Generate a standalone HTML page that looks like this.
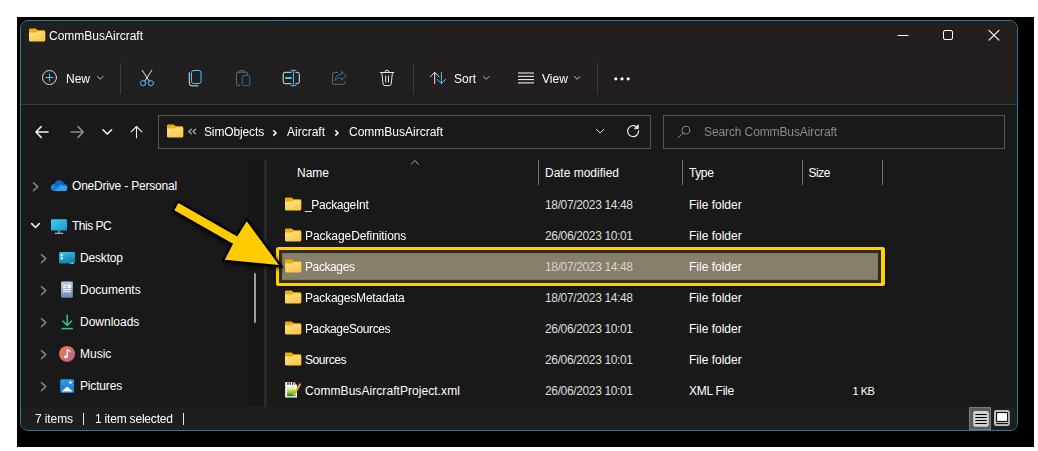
<!DOCTYPE html>
<html>
<head>
<meta charset="utf-8">
<title>CommBusAircraft</title>
<style>
*{margin:0;padding:0;box-sizing:border-box;}
html,body{width:1038px;height:451px;overflow:hidden;background:#fff;}
body{position:relative;font-family:"Liberation Sans",sans-serif;font-size:12px;color:#fff;}
.abs{position:absolute;}
#black{position:absolute;left:17px;top:17px;width:1017px;height:430px;background:#000;}
#win{position:absolute;left:20px;top:20px;width:998px;height:411px;border:1px solid #2b7a99;border-radius:8px;background:#191919;overflow:hidden;}
/* coordinates inside #win-inner are page coordinates (offset compensated) */
#in{position:absolute;left:-21px;top:-21px;width:1038px;height:451px;}
#top{position:absolute;left:21px;top:21px;width:996px;height:83px;background:linear-gradient(90deg,#202020 0%,#202020 12%,#221f1e 45%,#231f1e 100%);}
#topline{position:absolute;left:21px;top:104px;width:996px;height:1px;background:#3b3b3b;}
#status{position:absolute;left:21px;top:407px;width:996px;height:23px;background:#1e1e1e;}
.g{will-change:transform;}
.t{position:absolute;white-space:nowrap;line-height:14px;height:14px;color:#fff;}
.sep{position:absolute;width:1px;background:#3d3d3d;}
.box{position:absolute;border:1px solid #555;background:#191919;}
.colsep{position:absolute;width:1px;height:25px;top:160px;background:#747474;}
svg{position:absolute;overflow:visible;}
.ln{fill:none;stroke:#e6e6e6;stroke-width:1;stroke-linecap:round;stroke-linejoin:round;}
.bl{fill:none;stroke:#4cc2ff;stroke-width:1;stroke-linecap:round;stroke-linejoin:round;}
.chev{fill:none;stroke:#7c7c7c;stroke-width:1.6;stroke-linecap:round;stroke-linejoin:round;}
</style>
</head>
<body>
<div id="black"></div>
<div id="win"><div id="in">
  <div id="top"></div>
  <svg width="0" height="0" style="left:0;top:0;">
    <defs>
      <linearGradient id="ff" x1="0" y1="0" x2="0.6" y2="1">
        <stop offset="0" stop-color="#ffe391"/>
        <stop offset="1" stop-color="#fbc748"/>
      </linearGradient>
      <g id="folder">
        <path d="M0,1.6 Q0,0.4 1.2,0.4 H6.3 Q6.9,0.4 7.4,0.9 L8.7,2.2 H14.9 Q16.2,2.2 16.2,3.5 V12 H0 Z" fill="#f0ae00"/>
        <path d="M0,4.4 H6.4 Q7.1,4.4 7.7,3.9 L8.3,3.5 Q8.7,3.3 9.2,3.3 H15 Q16.2,3.3 16.2,4.5 V12.3 Q16.2,13.5 15,13.5 H1.2 Q0,13.5 0,12.3 Z" fill="url(#ff)"/>
      </g>
    </defs>
  </svg>

  <div id="topline"></div>


  <div class="box" style="left:158px;top:115px;width:493px;height:34px;"></div>
  <div class="box" style="left:663px;top:115px;width:342px;height:34px;"></div>
  <!-- ICONS -->
  <!-- title folder -->
  <svg style="left:29px;top:27.5px;" width="17" height="14"><use href="#folder"/></svg>
  <!-- window controls -->
  <svg style="left:0;top:0;" width="1038" height="60">
    <path class="ln" d="M898,35.5 H908" style="stroke:#fff"/>
    <rect class="ln" x="943.5" y="30.5" width="9" height="9" rx="1.5" style="stroke:#fff"/>
    <path class="ln" d="M989,30.3 L999,40.2 M999,30.3 L989,40.2" style="stroke:#fff;stroke-width:1.1"/>
  </svg>
  <!-- toolbar icons -->
  <svg style="left:0;top:0;" width="1038" height="100">
    <!-- new -->
    <circle class="ln" cx="49.5" cy="77.5" r="7" style="stroke:#dcdcdc"/>
    <path class="bl" d="M46,77.5 H53 M49.5,74 V81"/>
    <path class="chev" d="M97.5,76.5 L100.2,79.3 L103,76.5" style="stroke:#bdbdbd;stroke-width:1"/>
    <!-- cut -->
    <path class="ln" d="M142.3,70.3 L149.3,81.2 M151.7,70.3 L144.7,81.2"/>
    <circle class="bl" cx="143.1" cy="83.2" r="2.6"/>
    <circle class="bl" cx="150.9" cy="83.2" r="2.6"/>
    <!-- copy -->
    <rect class="bl" x="191.5" y="70.5" width="9.5" height="13" rx="2"/>
    <path class="ln" d="M189.3,72.8 V83.3 Q189.3,85.8 191.8,85.8 H198"/>
    <!-- paste (disabled) -->
    <path class="ln" style="stroke:#6b6b6b" d="M239.8,85.5 H238 Q236.4,85.5 236.4,83.9 V73.8 Q236.4,72.2 238,72.2 H246 Q247.6,72.2 247.6,73.8 V74.8"/>
    <path class="ln" style="stroke:#6b6b6b" d="M239,72.2 Q239,70.6 240.6,70.6 H243.4 Q245,70.6 245,72.2"/>
    <rect class="bl" style="stroke:#2a6f94" x="242.3" y="75.5" width="7.5" height="10" rx="1.5"/>
    <!-- rename -->
    <path class="ln" d="M291,72.3 H285.2 Q283.2,72.3 283.2,74.3 V81.7 Q283.2,83.7 285.2,83.7 H291 M295.8,72.3 H297.3 Q299.3,72.3 299.3,74.3 V81.7 Q299.3,83.7 297.3,83.7 H295.8"/>
    <path class="bl" d="M293.4,70.5 V85.5 M291,70.3 H295.8 M291,85.7 H295.8"/>
    <path class="bl" style="stroke-width:2;stroke-linecap:butt" d="M285.3,78 H291.6"/>
    <!-- share (disabled) -->
    <path class="ln" style="stroke:#666" d="M337.5,72.5 H334.3 Q332.5,72.5 332.5,74.3 V82.5 Q332.5,84.3 334.3,84.3 H343 Q344.8,84.3 344.8,82.5 V81.5"/>
    <path class="bl" style="stroke:#2a6f94" d="M341.5,71.5 L346.3,75.8 L341.5,80.2 V77.8 Q337,77.6 335,80.5 Q335.7,74.4 341.5,74 Z"/>
    <!-- delete -->
    <path class="ln" d="M380.3,72.5 H393.8 M385,72.3 Q385,70.2 387.1,70.2 Q389.2,70.2 389.2,72.3 M381.8,72.7 L383,83.8 Q383.2,85.6 385,85.6 H389.2 Q391,85.6 391.2,83.8 L392.4,72.7 M385.7,76 V82 M388.5,76 V82"/>
    <!-- sort -->
    <path class="ln" d="M434.7,72.5 V83.5 M430.3,76.8 L434.7,72.4 L439.1,76.8"/>
    <path class="bl" d="M441.4,72.5 V83.5 M437,79.2 L441.4,83.6 L445.8,79.2"/>
    <path class="chev" d="M483.5,76.5 L486.2,79.3 L489,76.5" style="stroke:#bdbdbd;stroke-width:1"/>
    <!-- view -->
    <path class="ln" style="stroke-linecap:butt;stroke:#fff" d="M518,73 H534 M518,76.3 H534 M518,79.6 H534 M518,82.9 H534"/>
    <path class="chev" d="M574.5,76.5 L577.2,79.3 L580,76.5" style="stroke:#bdbdbd;stroke-width:1"/>
    <!-- more -->
    <circle cx="615.8" cy="78.8" r="1.6" fill="#fff"/>
    <circle cx="622" cy="78.8" r="1.6" fill="#fff"/>
    <circle cx="628.2" cy="78.8" r="1.6" fill="#fff"/>
  </svg>
  <!-- nav icons -->
  <svg style="left:0;top:0;" width="1038" height="160">
    <path class="ln" style="stroke:#f2f2f2;stroke-width:1.5" d="M36,132 H48 M41.2,126.6 L35.9,132 L41.2,137.4"/>
    <path class="ln" style="stroke:#8e8e8e;stroke-width:1.5" d="M71.2,132 H83.2 M78,126.6 L83.3,132 L78,137.4"/>
    <path class="ln" style="stroke:#f2f2f2;stroke-width:1.6" d="M103,129.8 L107.3,134 L111.6,129.8"/>
    <path class="ln" style="stroke:#f2f2f2;stroke-width:1.1" d="M136.5,126.5 V137.8 M131.2,131.8 L136.5,126.5 L141.8,131.8"/>
    <!-- address bar -->
    <path class="chev" style="stroke:#a6a6a6;stroke-width:1.3" d="M191.3,129.2 L188.7,131.5 L191.3,133.8 M195.6,129.2 L193,131.5 L195.6,133.8"/>
    <path class="ln" style="stroke:#fff;stroke-width:1.5;stroke-linecap:butt;stroke-linejoin:miter" d="M273.3,130.2 L276,132.9 L273.3,135.6"/>
    <path class="ln" style="stroke:#fff;stroke-width:1.5;stroke-linecap:butt;stroke-linejoin:miter" d="M335.3,130.2 L338,132.9 L335.3,135.6"/>
    <path class="ln" style="stroke:#e0e0e0;stroke-width:1" d="M596.3,129.2 L600.1,133 L603.9,129.2"/>
    <path class="ln" style="stroke:#ececec;stroke-width:1.2" d="M638.6,130.8 A5.5,5.5 0 1 1 636.4,126.7"/><path d="M638.3,124.8 V128.7 H634.4 Z" fill="#ececec" stroke="#ececec" stroke-width="0.8" stroke-linejoin="round"/>
    <!-- search -->
    <circle class="ln" style="stroke:#8a8a8a" cx="685.8" cy="130.2" r="3.9"/>
    <path class="ln" style="stroke:#8a8a8a" d="M683,133 L678.2,137.6"/>
  </svg>
  <svg style="left:167px;top:123.5px;" width="17" height="14"><use href="#folder"/></svg>

  <!-- title -->
  <div class="t g" style="left:49px;top:29px;">CommBusAircraft</div>

  <!-- toolbar text -->
  <div class="t g" style="left:66px;top:72px;">New</div>
  <div class="t g" style="left:454px;top:72px;">Sort</div>
  <div class="t g" style="left:542px;top:72px;">View</div>
  <div class="sep" style="left:120px;top:63px;height:31px;"></div>
  <div class="sep" style="left:413px;top:63px;height:31px;"></div>
  <div class="sep" style="left:597px;top:63px;height:31px;"></div>

  <!-- address + search -->
  <div class="t g" style="left:204px;top:125px;letter-spacing:-0.13px;">SimObjects</div>
  <div class="t g" style="left:287px;top:125px;">Aircraft</div>
  <div class="t g" style="left:349px;top:125px;">CommBusAircraft</div>
  <div class="t g" style="left:704px;top:125px;color:#8c8c8c;letter-spacing:-0.11px;">Search CommBusAircraft</div>

  <!-- nav pane -->
  <div class="abs" style="left:246px;top:160px;width:18px;height:247px;background:#171717;"></div>
  <div class="abs" style="left:264px;top:160px;width:2.5px;height:247px;background:linear-gradient(90deg,#242424,#2d2d2d 50%,#222);"></div>
  <div class="abs" style="left:254px;top:273px;width:2px;height:50px;background:#9e9e9e;border-radius:1px;"></div>
  <div class="t" style="left:72px;top:179px;letter-spacing:-0.2px;">OneDrive - Personal</div>
  <div class="t" style="left:72px;top:219px;letter-spacing:-0.5px;">This PC</div>
  <div class="t" style="left:80px;top:251px;letter-spacing:-0.17px;">Desktop</div>
  <div class="t" style="left:80px;top:283px;">Documents</div>
  <div class="t" style="left:80px;top:315px;">Downloads</div>
  <div class="t" style="left:80px;top:347px;">Music</div>
  <div class="t" style="left:80px;top:379px;letter-spacing:-0.17px;">Pictures</div>

  <!-- headers -->
  <div class="t" style="left:297px;top:166px;">Name</div>
  <div class="t" style="left:545px;top:166px;">Date modified</div>
  <div class="t" style="left:689px;top:166px;letter-spacing:-0.4px;">Type</div>
  <div class="t" style="left:808.6px;top:166px;letter-spacing:-0.5px;">Size</div>
  <div class="colsep" style="left:538px;"></div>
  <div class="colsep" style="left:682px;"></div>
  <div class="colsep" style="left:802px;"></div>
  <div class="colsep" style="left:882px;"></div>

  <!-- highlight -->
  <div class="abs" id="hl" style="left:275.5px;top:247px;width:609.4px;height:38.7px;border:solid #ffd300;border-width:3.7px 4.1px 3.9px 3.5px;border-radius:2.5px;background:#857f6b;box-shadow:inset 0 0 1px 3px #2e2a18, 1px 1px 2px rgba(0,0,0,.6);"></div>


  <!-- selected row folder -->
  <svg style="left:285px;top:258.6px;" width="17" height="14"><use href="#folder"/></svg>
  <!-- arrow -->
  <svg style="left:0;top:0;filter:drop-shadow(1.5px 2px 2px rgba(0,0,0,.65));" width="400" height="300">
    <g transform="translate(176.35,206.6) rotate(29.7)">
      <path d="M0,-4.2 L67.7,-4.2 L68.4,-22.2 L118.1,0 L68.4,22.2 L67.7,4.2 L0,4.2 Z" fill="#ffcc00" stroke="#000" stroke-width="4.4" stroke-linejoin="miter" stroke-miterlimit="10" style="paint-order:stroke fill"/>
    </g>
  </svg>

  <!-- rows -->
  <div class="t" style="left:305px;top:198px;letter-spacing:-0.3px;">_PackageInt</div>
  <div class="t" style="left:545px;top:198px;color:#dedede;letter-spacing:-0.36px;">18/07/2023 14:48</div>
  <div class="t" style="left:689px;top:198px;">File folder</div>

  <div class="t" style="left:305px;top:229px;letter-spacing:-0.08px;">PackageDefinitions</div>
  <div class="t" style="left:545px;top:229px;color:#dedede;letter-spacing:-0.36px;">26/06/2023 10:01</div>
  <div class="t" style="left:689px;top:229px;">File folder</div>

  <div class="t" style="left:305px;top:260px;letter-spacing:-0.4px;">Packages</div>
  <div class="t" style="left:545px;top:260px;color:#d9d5c8;letter-spacing:-0.36px;">18/07/2023 14:48</div>
  <div class="t" style="left:689px;top:260px;">File folder</div>

  <div class="t" style="left:305px;top:291px;letter-spacing:-0.2px;">PackagesMetadata</div>
  <div class="t" style="left:545px;top:291px;color:#dedede;letter-spacing:-0.36px;">18/07/2023 14:48</div>
  <div class="t" style="left:689px;top:291px;">File folder</div>

  <div class="t" style="left:305px;top:322px;letter-spacing:-0.4px;">PackageSources</div>
  <div class="t" style="left:545px;top:322px;color:#dedede;letter-spacing:-0.36px;">26/06/2023 10:01</div>
  <div class="t" style="left:689px;top:322px;">File folder</div>

  <div class="t" style="left:305px;top:353px;letter-spacing:-0.43px;">Sources</div>
  <div class="t" style="left:545px;top:353px;color:#dedede;letter-spacing:-0.36px;">26/06/2023 10:01</div>
  <div class="t" style="left:689px;top:353px;">File folder</div>

  <div class="t" style="left:305px;top:384px;letter-spacing:0.06px;">CommBusAircraftProject.xml</div>
  <div class="t" style="left:545px;top:384px;color:#dedede;letter-spacing:-0.36px;">26/06/2023 10:01</div>
  <div class="t" style="left:689px;top:384px;letter-spacing:-0.25px;">XML File</div>
  <div class="t" style="left:852.5px;top:384px;font-size:11px;letter-spacing:-0.5px;">1 KB</div>

  <!-- status -->
  <div id="status"></div>

  <!-- nav pane icons -->
  <svg style="left:0;top:0;" width="270" height="410">
    <defs>
      <linearGradient id="gpc" x1="0" y1="0" x2="1" y2="1"><stop offset="0" stop-color="#3fd3ea"/><stop offset="1" stop-color="#1795cf"/></linearGradient>
      <linearGradient id="gdesk" x1="0" y1="0" x2="0.4" y2="1"><stop offset="0" stop-color="#3ec6f2"/><stop offset="1" stop-color="#0f7fae"/></linearGradient>
      <linearGradient id="gdoc" x1="0" y1="0" x2="0" y2="1"><stop offset="0" stop-color="#c2cfe3"/><stop offset="1" stop-color="#6e89b2"/></linearGradient>
      <linearGradient id="gmus" x1="0" y1="0.2" x2="1" y2="0.9"><stop offset="0" stop-color="#ee8243"/><stop offset="1" stop-color="#b75aa8"/></linearGradient>
      <linearGradient id="gpic" x1="0" y1="0" x2="0" y2="1"><stop offset="0" stop-color="#2a9df0"/><stop offset="1" stop-color="#1279d0"/></linearGradient>
    </defs>
    <!-- chevrons -->
    <path class="chev" d="M33.5,182.8 L37.7,186.7 L33.5,190.6"/>
    <path class="chev" style="stroke:#e4e4e4;stroke-width:1.7" d="M31.7,223.6 L35.5,227.5 L39.3,223.6"/>
    <path class="chev" d="M41.5,254.6 L45.7,258.6 L41.5,262.6"/>
    <path class="chev" d="M41.5,286.6 L45.7,290.6 L41.5,294.6"/>
    <path class="chev" d="M41.5,318.6 L45.7,322.6 L41.5,326.6"/>
    <path class="chev" d="M41.5,350.6 L45.7,354.6 L41.5,358.6"/>
    <path class="chev" d="M41.5,382.6 L45.7,386.6 L41.5,390.6"/>
    <!-- onedrive cloud -->
    <clipPath id="cl"><circle cx="54.4" cy="187.5" r="3.5"/><circle cx="59.2" cy="185.1" r="4.7"/><circle cx="63.7" cy="187.4" r="3.6"/><rect x="54.4" y="186" width="9.3" height="5"/></clipPath>
    <g clip-path="url(#cl)">
      <rect x="50" y="180" width="18" height="12" fill="#1684e2"/>
      <path d="M54,180 H66 V186.2 L60.5,184.3 L55.3,187 Z" fill="#0c6ac6"/>
      <path d="M54.5,191.5 L61,185.6 L68,186.5 V192 Z" fill="#2aa7ed"/>
    </g>
    <!-- this pc -->
    <rect x="51" y="219.3" width="16" height="11.3" rx="1" fill="url(#gpc)"/>
    <rect x="58.3" y="230.6" width="1.4" height="2.4" fill="#9fb4c0"/>
    <rect x="54.8" y="232.8" width="8.4" height="1" fill="#c8d4dc"/>
    <!-- desktop -->
    <rect x="59" y="252" width="16" height="11.6" rx="1.6" fill="url(#gdesk)"/>
    <rect x="60.8" y="254.2" width="2" height="2" fill="#fff"/>
    <rect x="60.8" y="257.4" width="2" height="2" fill="#fff"/>
    <rect x="70.2" y="262.6" width="1.2" height="1.2" fill="#dff"/>
    <rect x="72.2" y="262.6" width="1.2" height="1.2" fill="#dff"/>
    <!-- documents -->
    <rect x="61" y="281.6" width="11.8" height="16.1" rx="1.2" fill="url(#gdoc)"/>
    <path d="M63,285.5 H66.5 M63,287.5 H66.5 M63,289.6 H70.8 M63,291.7 H70.8" stroke="#fff" stroke-width="1" fill="none"/>
    <rect x="67.6" y="284.6" width="3.3" height="3.4" fill="#fff"/>
    <!-- downloads -->
    <path d="M67.2,315.2 V325 M62.8,321 L67.2,325.4 L71.6,321" fill="none" stroke="#2bc48d" stroke-width="1.5" stroke-linecap="round" stroke-linejoin="round"/>
    <path d="M61.6,328.6 H72.8" fill="none" stroke="#2bc48d" stroke-width="1.5"/>
    <!-- music -->
    <circle cx="67.1" cy="353.9" r="8" fill="url(#gmus)"/>
    <path d="M67.2,349.6 V356.5 M67.2,349.6 Q69.3,349.7 69.8,351.6" stroke="#fff" stroke-width="1.3" fill="none" stroke-linecap="round"/>
    <ellipse cx="65.9" cy="356.7" rx="1.8" ry="1.5" fill="#fff"/>
    <!-- pictures -->
    <rect x="60.2" y="379.3" width="13.8" height="13.6" rx="1.6" fill="url(#gpic)"/>
    <path d="M61.6,391.6 L66.3,387.2 Q67.2,386.3 68.1,387.2 L73,391.6 Z" fill="#fff"/>
    <circle cx="70.4" cy="382.5" r="1.3" fill="#fff"/>
  </svg>

  <!-- header caret -->
  <svg style="left:0;top:0;" width="500" height="200"><path d="M411,164.5 L414.8,160.5 L418.6,164.5" fill="none" stroke="#a8a8a8" stroke-width="1"/></svg>

  <!-- file icons -->
  <svg style="left:285px;top:196.6px;" width="17" height="14"><use href="#folder"/></svg>
  <svg style="left:285px;top:227.6px;" width="17" height="14"><use href="#folder"/></svg>
  <svg style="left:285px;top:289.6px;" width="17" height="14"><use href="#folder"/></svg>
  <svg style="left:285px;top:320.6px;" width="17" height="14"><use href="#folder"/></svg>
  <svg style="left:285px;top:351.6px;" width="17" height="14"><use href="#folder"/></svg>
  <!-- xml icon -->
  <svg style="left:285px;top:382px;" width="17" height="16">
    <defs><linearGradient id="gx" x1="0" y1="0" x2="0" y2="1"><stop offset="0" stop-color="#e4ec58"/><stop offset="0.55" stop-color="#7cc83c"/><stop offset="1" stop-color="#0f6d10"/></linearGradient></defs>
    <path d="M0.2,0.3 H9 L12,3.3 V15.5 H0.2 Z" fill="#fff"/>
    <path d="M9,0.3 V3.3 H12 Z" fill="#c8c8c8"/>
    <rect x="2.2" y="0.6" width="1.4" height="2.2" fill="#333"/>
    <rect x="4.6" y="0.6" width="1.4" height="2.2" fill="#333"/>
    <rect x="7" y="0.6" width="1.4" height="2.2" fill="#333"/>
    <rect x="2" y="5" width="8" height="0.8" fill="#c4d0e4"/>
    <rect x="2" y="6.6" width="8.5" height="7.6" fill="url(#gx)"/>
    <path d="M8,13.8 L8.6,11.6 L13.6,2.6 L15.4,3.7 L10.3,12.6 Z" fill="#f5a300"/>
    <path d="M8,13.8 L8.6,11.6 L10.3,12.6 Z" fill="#e8c89a"/>
    <path d="M13.6,2.6 L14.3,1.4 L16.1,2.5 L15.4,3.7 Z" fill="#b8bcc4"/>
    <path d="M14.3,1.4 L14.8,0.5 Q15.6,0 16.3,0.5 Q16.9,1 16.6,1.7 L16.1,2.5 Z" fill="#c21010"/>
  </svg>

  <!-- status view buttons -->
  <div class="abs" style="left:969px;top:407px;width:22px;height:23px;background:#5c5c5c;border:1px solid #7c7c7c;"></div>
  <svg style="left:0;top:0;" width="1038" height="451">
    <rect x="973.2" y="411.1" width="15.6" height="15.6" rx="2" fill="#d2d2d2"/>
    <path d="M975.3,414.5 H986.8 M975.3,417.5 H986.8 M975.3,420.5 H986.8 M975.3,423.5 H986.8" stroke="#000" stroke-width="1" fill="none"/>
    <rect x="994" y="410" width="15.8" height="16" rx="2.2" fill="#bdbdbd"/>
    <rect x="996.6" y="412.6" width="11" height="8.8" fill="#fff" stroke="#000" stroke-width="1"/>
    <path d="M996.2,423.6 H1008" stroke="#000" stroke-width="1"/>
  </svg>

  <div class="t" style="left:35px;top:412px;letter-spacing:-0.1px;">7 items</div>
  <div class="t" style="left:95px;top:412px;letter-spacing:-0.2px;">1 item selected</div>
  <div class="abs" style="left:83px;top:413px;width:1px;height:11.5px;background:#e4e4e4;"></div>
  <div class="abs" style="left:183px;top:413px;width:1px;height:11.5px;background:#e4e4e4;"></div>
</div></div>
</body>
</html>
